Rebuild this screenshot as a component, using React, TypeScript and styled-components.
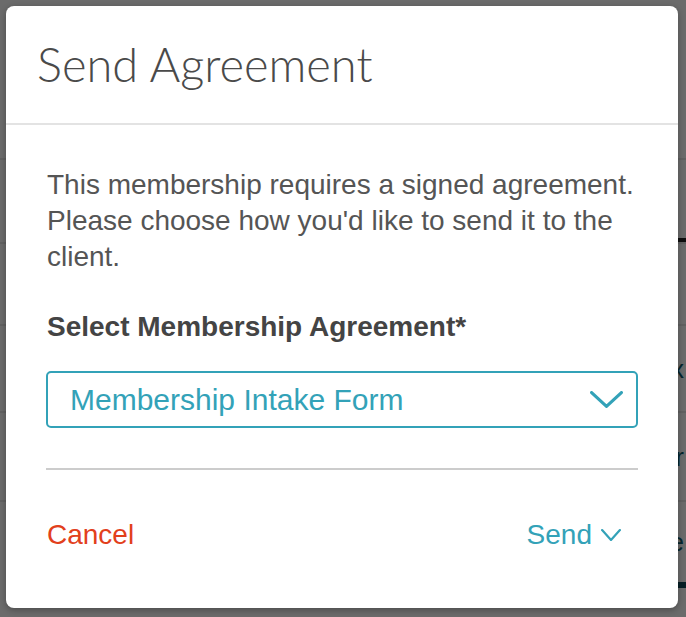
import styled, { createGlobalStyle } from 'styled-components'

const GlobalStyle = createGlobalStyle`
   html, body {
      margin: 0;
      padding: 0;
      width: 686px;
      height: 617px;
      overflow: hidden;
      font-family: 'Liberation Sans', Arial, sans-serif;
   }
`

const Page = styled.div`
   position: relative;
   width: 686px;
   height: 617px;
   background: #ffffff;
   overflow: hidden;
`

const BgRows = styled.div`
   display: flex;
   flex-direction: column;
   padding-top: 158px;
`

const BgRow = styled.div<{ $h: number }>`
   height: ${(p) => p.$h}px;
   border-top: 2px solid #e6e6e6;
   display: flex;
   justify-content: flex-end;
   align-items: center;
   color: #0e5a6b;
   font-size: 26px;
   line-height: 1;
   padding-right: 2px;
`

const BgTab = styled.div`
   height: 4px;
   margin-left: 600px;
   background: #222222;
`

const BgFooterBar = styled.div`
   height: 6px;
   margin-left: 552px;
   background: #10485a;
`

const BackDrop = styled.div`
   position: absolute;
   inset: 0;
   background-color: rgba(0, 0, 0, 0.58);
   display: flex;
   padding: 6px 8px 9px 6px;
   box-sizing: border-box;
`

const Content = styled.div`
   flex: 1;
   background: #ffffff;
   border-radius: 8px;
   box-shadow: 0 2px 6px rgba(0, 0, 0, 0.3);
   display: flex;
   flex-direction: column;
`

const Header = styled.div`
   height: 117px;
   padding: 0 31px;
   border-bottom: 2px solid #e3e3e3;
   display: flex;
   align-items: center;
`

const Title = styled.h5`
   margin: 0;
   font-family: Lato, 'Open Sans', sans-serif;
   font-weight: 300;
   font-size: 47px;
   color: #4a4a4a;
   padding-bottom: 2px;
`

const Body = styled.div`
   padding: 42px 40px 0 40px;
`

const Intro = styled.p`
   margin: 0 0 0 1px;
   font-size: 28px;
   line-height: 36px;
   color: #555555;
`

const Label = styled.div`
   margin: 36px 0 0 1px;
   font-size: 28px;
   line-height: 32px;
   font-weight: bold;
   color: #444444;
`

const Select = styled.div`
   margin-top: 28px;
   height: 57px;
   border: 2px solid #33a2b8;
   border-radius: 5px;
   display: flex;
   align-items: center;
   justify-content: space-between;
   padding: 0 13px 0 22px;
   box-sizing: border-box;
   color: #33a2b8;
   font-size: 30px;
`

const Divider = styled.hr`
   margin: 40px 0 0;
   border: 0;
   border-top: 2px solid #cccccc;
`

const Footer = styled.div`
   display: flex;
   justify-content: space-between;
   align-items: center;
   padding: 49px 57px 0 41px;
`

const LinkButton = styled.button<{ $tone: 'danger' | 'primary' }>`
   background: none;
   border: 0;
   padding: 0;
   font-family: 'Liberation Sans', Arial, sans-serif;
   font-size: 28px;
   line-height: 32px;
   color: ${(p) => (p.$tone === 'danger' ? '#e2401c' : '#33a2b8')};
   display: flex;
   align-items: center;
   gap: 9px;
   cursor: pointer;
`

const Chevron = ({ w, h, stroke }: { w: number; h: number; stroke: number }) => (
   <svg width={w} height={h} viewBox={`0 0 ${w} ${h}`} fill='none'>
      <path
         d={`M${stroke / 2} ${stroke / 2} L${w / 2} ${h - stroke / 2} L${w - stroke / 2} ${stroke / 2}`}
         stroke='#33a2b8'
         strokeWidth={stroke}
         strokeLinecap='round'
         strokeLinejoin='round'
      />
   </svg>
)

export default function App() {
   return (
      <Page>
         <GlobalStyle />
         <BgRows>
            <BgRow $h={78} />
            <BgTab />
            <BgRow $h={80} />
            <BgRow $h={85}>x</BgRow>
            <BgRow $h={87}>r</BgRow>
            <BgRow $h={80}>e</BgRow>
            <BgFooterBar />
         </BgRows>
         <BackDrop>
            <Content>
               <Header>
                  <Title>Send Agreement</Title>
               </Header>
               <Body>
                  <Intro>
                     This membership requires a signed agreement. Please choose how you'd like to send
                     it to the client.
                  </Intro>
                  <Label>Select Membership Agreement*</Label>
                  <Select>
                     <span>Membership Intake Form</span>
                     <Chevron w={33} h={17} stroke={3.2} />
                  </Select>
                  <Divider />
               </Body>
               <Footer>
                  <LinkButton $tone='danger'>Cancel</LinkButton>
                  <LinkButton $tone='primary'>
                     Send
                     <Chevron w={20} h={12} stroke={2.2} />
                  </LinkButton>
               </Footer>
            </Content>
         </BackDrop>
      </Page>
   )
}
